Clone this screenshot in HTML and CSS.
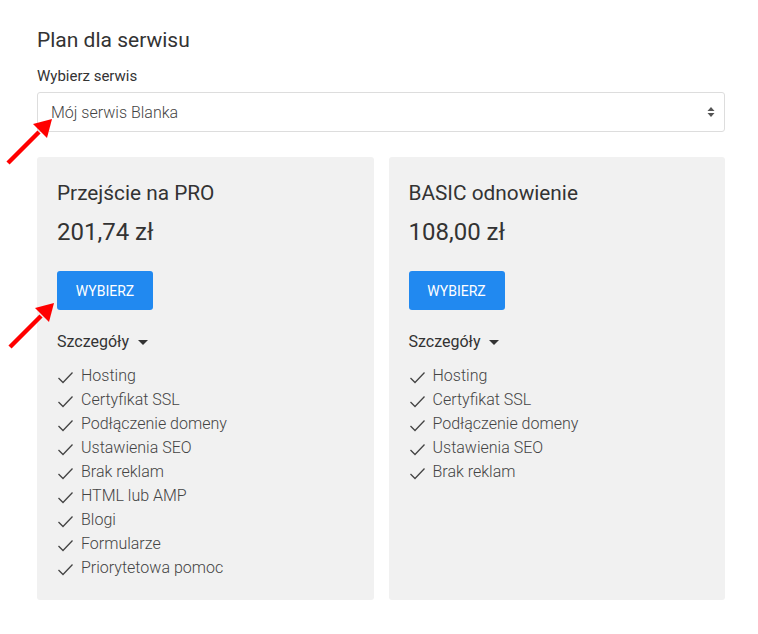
FILE: index.html
```html
<!DOCTYPE html>
<html lang="pl">
<head>
<meta charset="UTF-8">
<title>Plan dla serwisu</title>
<link rel="stylesheet" href="styles.css">
</head>
<body>

<div class="container">
    <h2>Plan dla serwisu</h2>

    <label for="site">Wybierz serwis</label>
    <div class="select-wrap">
        <select id="site">
            <option>Mój serwis Blanka</option>
        </select>
        <span class="select-arrows">
            <svg width="8" height="12" viewBox="0 0 8 12"><path d="M4 1 L7.5 5 L0.5 5 Z" fill="#555"/><path d="M4 11 L7.5 7 L0.5 7 Z" fill="#555"/></svg>
        </span>
    </div>

    <div class="plans">
        <div class="plan">
            <h3>Przejście na PRO</h3>
            <div class="price">201,74 zł</div>
            <button class="btn">WYBIERZ</button>
            <div class="details">Szczegóły <span class="caret"></span></div>
            <ul class="features">
                <li>Hosting</li>
                <li>Certyfikat SSL</li>
                <li>Podłączenie domeny</li>
                <li>Ustawienia SEO</li>
                <li>Brak reklam</li>
                <li>HTML lub AMP</li>
                <li>Blogi</li>
                <li>Formularze</li>
                <li>Priorytetowa pomoc</li>
            </ul>
        </div>
        <div class="plan">
            <h3>BASIC odnowienie</h3>
            <div class="price">108,00 zł</div>
            <button class="btn">WYBIERZ</button>
            <div class="details">Szczegóły <span class="caret"></span></div>
            <ul class="features">
                <li>Hosting</li>
                <li>Certyfikat SSL</li>
                <li>Podłączenie domeny</li>
                <li>Ustawienia SEO</li>
                <li>Brak reklam</li>
            </ul>
        </div>
    </div>
</div>

<!-- red pointer arrows drawn over the screenshot -->
<svg class="pointer pointer-select" width="50" height="50" viewBox="0 0 50 50">
    <line x1="3" y1="47" x2="34" y2="16" stroke="#f00" stroke-width="4.5"/>
    <path d="M47 3 L28 8 L42 22 Z" fill="#f00"/>
</svg>
<svg class="pointer pointer-btn" width="50" height="50" viewBox="0 0 50 50">
    <line x1="3" y1="47" x2="34" y2="16" stroke="#f00" stroke-width="4.5"/>
    <path d="M47 3 L28 8 L42 22 Z" fill="#f00"/>
</svg>

</body>
</html>
```

FILE: styles.css
```css
body {
    margin: 0;
    font-family: Roboto, "Liberation Sans", Arial, sans-serif;
    color: #333;
    background: #fff;
}

.container {
    width: 688px;
    margin: 0 0 0 37px;
    padding-top: 27px;
}

h2 {
    font-size: 21px;
    font-weight: 400;
    margin: 0;
    line-height: 26px;
}

label {
    display: block;
    font-size: 15px;
    margin-top: 13px;
    line-height: 20px;
}

.select-wrap {
    position: relative;
    margin-top: 6px;
}

select {
    width: 100%;
    height: 40px;
    padding: 0 13px;
    border: 1px solid #ddd;
    border-radius: 3px;
    background: #fff;
    font-family: inherit;
    font-size: 16px;
    font-weight: 300;
    color: #444;
    appearance: none;
    -webkit-appearance: none;
    box-sizing: border-box;
}

.select-arrows {
    position: absolute;
    right: 10px;
    top: 14px;
    line-height: 0;
}

.plans {
    display: flex;
    gap: 15px;
    margin-top: 25px;
}

.plan {
    flex: 1;
    background: #f1f1f1;
    border-radius: 3px;
    padding: 23px 20px 20px;
}

.plan h3 {
    font-size: 20.8px;
    font-weight: 400;
    margin: 0;
    line-height: 26px;
}

.price {
    font-size: 24px;
    line-height: 30px;
    margin-top: 11px;
}

.btn {
    display: block;
    margin-top: 24px;
    width: 96px;
    height: 39px;
    border: none;
    border-radius: 3px;
    background: #2189f0;
    color: #fff;
    font-family: inherit;
    font-size: 14px;
}

.details {
    margin-top: 21px;
    font-size: 16px;
    line-height: 22px;
}

.caret {
    display: inline-block;
    width: 0;
    height: 0;
    margin-left: 5px;
    vertical-align: middle;
    border-left: 5px solid transparent;
    border-right: 5px solid transparent;
    border-top: 5px solid #333;
}

.features {
    list-style: none;
    margin: 11px 0 0;
    padding: 0;
}

.features li {
    font-size: 16px;
    font-weight: 300;
    color: #444;
    line-height: 24px;
    padding-left: 24px;
    background: url("data:image/svg+xml,%3Csvg xmlns='http://www.w3.org/2000/svg' width='17' height='16'%3E%3Cpath d='M1.5 9 L6 13.5 L15.5 3.5' fill='none' stroke='%23444' stroke-width='1.3'/%3E%3C/svg%3E") no-repeat 0 5px;
}

.pointer {
    position: absolute;
}

.pointer-select {
    left: 5px;
    top: 116px;
}

.pointer-btn {
    left: 7px;
    top: 300px;
}
```
